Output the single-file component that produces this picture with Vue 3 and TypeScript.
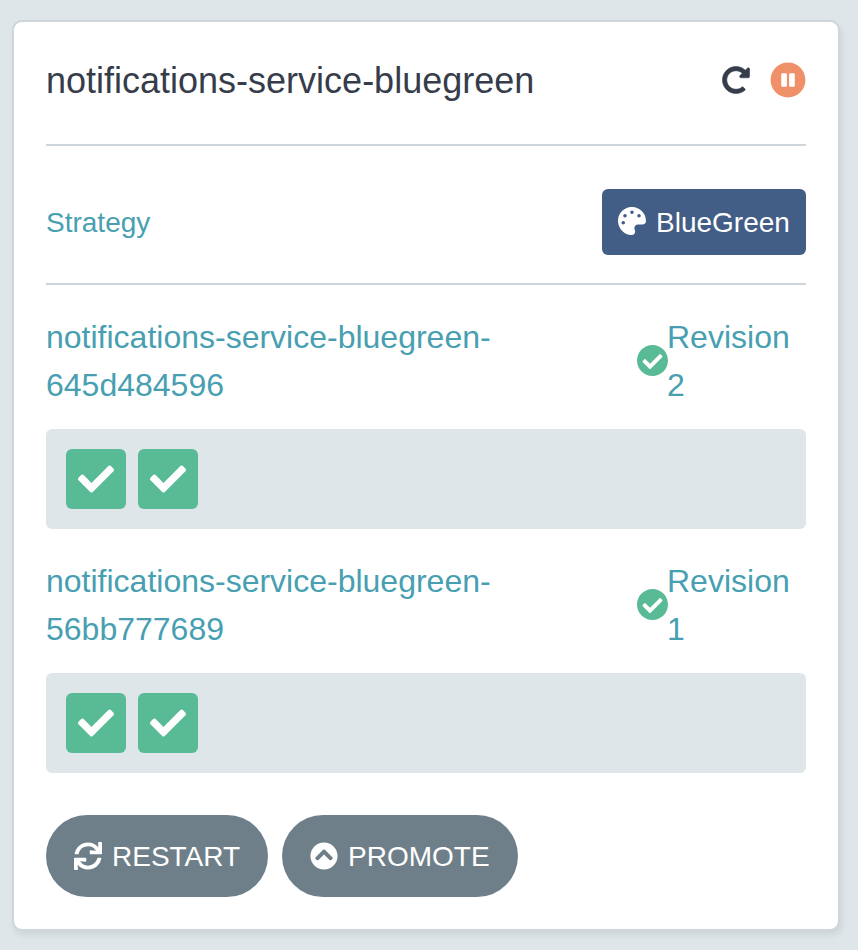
<script setup lang="ts">
interface Revision { hash: string; number: number; pods: number }
const service = 'notifications-service-bluegreen'
const revisions: Revision[] = [
  { hash: '645d484596', number: 2, pods: 2 },
  { hash: '56bb777689', number: 1, pods: 2 },
]
const check = 'M173.898 439.404l-166.4-166.4c-9.997-9.997-9.997-26.206 0-36.204l36.203-36.204c9.997-9.998 26.207-9.998 36.204 0L192 312.69 432.095 72.596c9.997-9.997 26.207-9.997 36.204 0l36.203 36.204c9.997 9.997 9.997 26.206 0 36.204l-294.4 294.401c-9.998 9.997-26.207 9.997-36.204-.001z'
</script>

<template>
  <main class="page">
    <section class="card">
      <header class="head">
        <h1>{{ service }}</h1>
        <div class="tools">
          <svg class="redo" viewBox="0 0 512 512"><path d="M256.455 8c66.269.119 126.437 26.233 170.859 68.685l35.715-35.715C478.149 25.851 504 36.559 504 57.941V192c0 13.255-10.745 24-24 24H345.941c-21.382 0-32.090-25.851-16.971-40.971l41.750-41.749c-30.864-28.899-70.801-44.907-113.230-45.273-92.398-.798-170.283 73.977-169.484 169.442C88.764 348.009 162.184 424 256 424c41.127 0 79.997-14.678 110.629-41.556 4.743-4.161 11.906-3.908 16.368.553l39.662 39.662c4.872 4.872 4.631 12.815-.482 17.433C378.202 479.813 319.926 504 256 504 119.034 504 8.001 392.967 8 256.002 7.999 119.193 119.646 7.755 256.455 8z" /></svg>
          <svg class="pause" viewBox="0 0 512 512"><path d="M256 8C119 8 8 119 8 256s111 248 248 248 248-111 248-248S393 8 256 8zm-16 328c0 8.800-7.200 16-16 16h-48c-8.800 0-16-7.200-16-16V176c0-8.800 7.200-16 16-16h48c8.800 0 16 7.200 16 16v160zm112 0c0 8.800-7.200 16-16 16h-48c-8.800 0-16-7.200-16-16V176c0-8.800 7.200-16 16-16h48c8.800 0 16 7.200 16 16v160z" /></svg>
        </div>
      </header>
      <div class="strategy">
        <span>Strategy</span>
        <div class="tag">
          <svg viewBox="0 0 512 512"><path d="M204.300 5C104.900 24.400 24.800 104.300 5.200 203.400c-37 187 131.700 326.400 258.800 306.700 41.200-6.400 61.400-54.600 42.500-91.700-23.100-45.400 9.900-98.400 60.900-98.400h79.700c35.800 0 64.800-29.600 64.900-65.300C511.500 97.100 368.100-26.900 204.300 5zM96 320c-17.700 0-32-14.300-32-32s14.300-32 32-32 32 14.300 32 32-14.300 32-32 32zm32-128c-17.700 0-32-14.300-32-32s14.300-32 32-32 32 14.300 32 32-14.300 32-32 32zm128-64c-17.700 0-32-14.300-32-32s14.300-32 32-32 32 14.300 32 32-14.300 32-32 32zm128 64c-17.700 0-32-14.300-32-32s14.300-32 32-32 32 14.300 32 32-14.300 32-32 32z" /></svg>
          <span>BlueGreen</span>
        </div>
      </div>
      <article v-for="rev in revisions" :key="rev.hash" class="revision">
        <div class="info">
          <span class="name">{{ service }}-<br>{{ rev.hash }}</span>
          <div class="status">
            <svg viewBox="8 8 496 496"><path d="M504 256c0 136.967-111.033 248-248 248S8 392.967 8 256 119.033 8 256 8s248 111.033 248 248zM227.314 387.314l184-184c6.248-6.248 6.248-16.379 0-22.627l-22.627-22.627c-6.248-6.249-16.379-6.249-22.628 0L216 308.118l-70.059-70.059c-6.248-6.248-16.379-6.248-22.628 0l-22.627 22.627c-6.248 6.248-6.248 16.379 0 22.627l104 104c6.249 6.249 16.379 6.249 22.628.001z" /></svg>
            <span>Revision<br>{{ rev.number }}</span>
          </div>
        </div>
        <div class="pods">
          <div v-for="pod in rev.pods" :key="pod" class="pod"><svg viewBox="0 0 512 512"><path :d="check" /></svg></div>
        </div>
      </article>
      <footer class="actions">
        <button class="restart">
          <svg viewBox="0 0 512 512"><path d="M440.650 12.570l4 82.770A247.160 247.160 0 0 0 255.830 8C134.730 8 33.910 94.920 12.290 209.820A12 12 0 0 0 24.090 224h49.050a12 12 0 0 0 11.670-9.260 175.910 175.910 0 0 1 317-56.940l-101.460-4.860a12 12 0 0 0-12.570 12v47.410a12 12 0 0 0 12 12H500a12 12 0 0 0 12-12V12a12 12 0 0 0-12-12h-47.370a12 12 0 0 0-11.980 12.570zM255.830 432a175.610 175.610 0 0 1-146-77.800l101.800 4.870a12 12 0 0 0 12.570-12v-47.400a12 12 0 0 0-12-12H12a12 12 0 0 0-12 12V500a12 12 0 0 0 12 12h47.350a12 12 0 0 0 12-12.600l-4.150-82.570A247.170 247.170 0 0 0 255.830 504c121.110 0 221.930-86.920 243.550-201.820a12 12 0 0 0-11.800-14.180h-49.050a12 12 0 0 0-11.670 9.260A175.860 175.860 0 0 1 255.830 432z" /></svg>
          <span>RESTART</span>
        </button>
        <button class="promote">
          <svg viewBox="0 0 512 512"><path d="M8 256C8 119 119 8 256 8s248 111 248 248-111 248-248 248S8 393 8 256zm231-113.900L103.500 277.600c-9.400 9.400-9.400 24.600 0 33.900l17 17c9.400 9.400 24.600 9.400 33.900 0L256 226.900l101.600 101.600c9.400 9.400 24.600 9.400 33.900 0l17-17c9.400-9.400 9.400-24.600 0-33.900L273 142.100c-9.400-9.400-24.600-9.400-34 0z" /></svg>
          <span>PROMOTE</span>
        </button>
      </footer>
    </section>
  </main>
</template>

<style>
body { background: #dee6e9; }
</style>
<style scoped>
.page, .page * { box-sizing: border-box; }
.page { height: 950px; padding: 20px 18px 19px 12px; font-family: "Liberation Sans", Arial, sans-serif; overflow: hidden; }
svg { display: block; flex: none; fill: currentColor; }
span, h1 { white-space: nowrap; }
.card { height: 911px; border: 2px solid #ced6dc; border-radius: 10px; background: #fff; padding: 0 32px; box-shadow: 2px 4px 6px rgba(0,0,0,.08); }
.head { height: 124px; border-bottom: 2px solid #ced6dc; display: flex; justify-content: space-between; align-items: flex-start; }
h1 { margin: 38px 0 0; font-size: 36px; line-height: 42px; font-weight: 400; color: #363c4a; }
.tools { display: flex; align-items: center; gap: 20px; margin-top: 40.4px; }
.redo { width: 28px; height: 28px; color: #363c4a; stroke: currentColor; stroke-width: 10; }
.pause { width: 36px; height: 36px; color: #ef9068; }
.strategy { height: 139px; border-bottom: 2px solid #ced6dc; padding-top: 14px; display: flex; align-items: center; justify-content: space-between; color: #489fb1; font-size: 28px; }
.tag { width: 204px; height: 66px; padding: 0 16px; display: flex; align-items: center; gap: 10px; border-radius: 6px; background: #425d86; color: #fff; }
.strategy > span { margin-top: 3px; }
.tag svg { width: 28px; height: 28px; margin-bottom: 2px; }
.tag span { margin-top: 2px; }
.revision { height: 244px; padding-top: 28px; color: #489fb1; font-size: 32px; line-height: 48px; }
.info { display: flex; justify-content: space-between; height: 96px; }
.status { display: flex; align-items: center; width: 169px; }
.status svg { width: 31px; height: 31px; color: #59ba96; margin: 0 -1px 2px 0; }
.pods { margin-top: 20px; height: 100px; padding: 20px; border-radius: 6px; background: #dee6e9; display: flex; gap: 12px; }
.pod { width: 60px; height: 60px; border-radius: 6px; background: #59ba96; color: #fff; display: flex; align-items: center; justify-content: center; }
.pod svg { width: 36px; height: 36px; }
.actions { display: flex; gap: 14px; padding-top: 42px; }
button { height: 82px; border: 0; border-radius: 41px; padding: 0 28px; display: flex; align-items: center; gap: 10px; background: #6f7f8a; color: #fff; font: 28px "Liberation Sans", Arial, sans-serif; }
.restart { width: 222px; }
.promote { width: 236px; }
button svg { width: 28px; height: 28px; margin-bottom: 1px; }
button span { margin-top: 1px; }
</style>
